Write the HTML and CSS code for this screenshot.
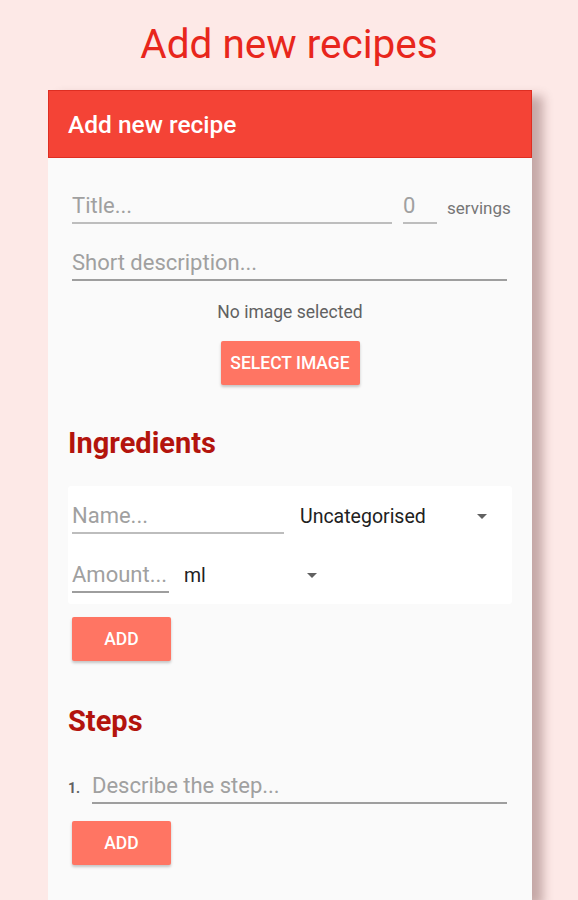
FILE: index.html
```html
<!DOCTYPE html>
<html>
<head>
<meta charset="utf-8">
<link rel="stylesheet" href="styles.css">
</head>
<body>
<h1 class="page-title">Add new recipes</h1>
<div class="card">
  <div class="card-header">Add new recipe</div>
  <div class="card-body">
    <div class="row-title">
      <div class="field field-title placeholder">Title...</div>
      <div class="field field-servings placeholder">0</div>
      <div class="servings-label">servings</div>
    </div>
    <div class="field field-desc placeholder">Short description...</div>
    <div class="no-image">No image selected</div>
    <div class="center"><button class="btn btn-select">SELECT IMAGE</button></div>

    <h2 class="section-title">Ingredients</h2>
    <div class="ingredient-box">
      <div class="ing-row">
        <div class="field field-name placeholder">Name...</div>
        <div class="select select-cat"><span>Uncategorised</span><span class="arrow"></span></div>
      </div>
      <div class="ing-row ing-row2">
        <div class="field field-amount placeholder">Amount...</div>
        <div class="select select-unit"><span>ml</span><span class="arrow"></span></div>
      </div>
    </div>
    <button class="btn btn-add">ADD</button>

    <h2 class="section-title steps-title">Steps</h2>
    <div class="step-row">
      <span class="step-num">1.</span>
      <div class="field field-step placeholder">Describe the step...</div>
    </div>
    <button class="btn btn-add btn-add-step">ADD</button>
  </div>
</div>
</body>
</html>
```
FILE: styles.css
```css
html, body {
  margin: 0;
  padding: 0;
  background: #fde9e7;
  font-family: Roboto, "Noto Sans", sans-serif;
  overflow: hidden;
  height: 900px;
}
.page-title {
  margin: 0;
  padding-top: 20px;
  height: 90px;
  box-sizing: border-box;
  text-align: center;
  font-weight: 400;
  font-size: 40.5px;
  line-height: 48px;
  color: #e8261c;
}
.card {
  margin-left: 48px;
  width: 484px;
  height: 810px;
  background: #fafafa;
  box-shadow: 11px 6px 10px rgba(70, 20, 20, 0.3);
}
.card-header {
  height: 68px;
  box-sizing: border-box;
  background: #f44336;
  border: 1px solid #de2e22;
  color: #fff;
  font-size: 24.5px;
  font-weight: 500;
  line-height: 68px;
  padding-left: 19px;
}
.card-body {
  padding: 0 20px;
}
.field {
  height: 32px;
  border-bottom: 2px solid #bdbdbd;
  font-size: 22px;
  line-height: 32px;
  white-space: nowrap;
  overflow: hidden;
}
.placeholder { color: #a0a0a0; }
.row-title {
  display: flex;
  align-items: flex-start;
  margin-top: 32px;
  margin-left: 4px;
}
.field-title { width: 320px; }
.field-servings { width: 34px; margin-left: 11px; }
.servings-label {
  margin-left: 10px;
  font-size: 17px;
  line-height: 36px;
  color: #757575;
  white-space: nowrap;
}
.field-desc {
  margin: 21px 5px 0 4px;
  border-bottom-color: #9e9e9e;
}
.no-image {
  text-align: center;
  margin-top: 20px;
  font-size: 17.5px;
  line-height: 22px;
  color: #616161;
}
.center { text-align: center; margin-top: 18px; }
.btn {
  display: block;
  border: none;
  background: #ff7563;
  color: #fff;
  font-family: Roboto, sans-serif;
  font-weight: 500;
  font-size: 17.5px;
  height: 44px;
  border-radius: 2px;
  padding: 0;
  box-shadow: 0 2px 3px rgba(0,0,0,0.22);
}
.btn-select { width: 139px; margin: 0 auto; }
.section-title {
  margin: 0;
  font-size: 29px;
  font-weight: 700;
  color: #b3140d;
  line-height: 32px;
  margin-top: 42px;
}
.ingredient-box {
  margin-top: 27px;
  background: #fff;
  height: 118px;
  box-sizing: border-box;
  padding: 14px 4px 0;
  border-radius: 3px;
}
.ing-row {
  display: flex;
  align-items: flex-start;
}
.ing-row2 { margin-top: 25px; }
.field-name { width: 212px; }
.field-amount { width: 97px; border-bottom-color: #9e9e9e; }
.select {
  display: flex;
  align-items: center;
  justify-content: space-between;
  height: 32px;
  font-size: 19.5px;
  color: #212121;
}
.select-cat { margin-left: 16px; width: 187px; }
.select-unit { margin-left: 15px; width: 133px; }
.arrow {
  width: 0;
  height: 0;
  border-left: 5px solid transparent;
  border-right: 5px solid transparent;
  border-top: 5px solid #616161;
}
.btn-add {
  width: 99px;
  margin-top: 13px;
  margin-left: 4px;
}
.steps-title { margin-top: 44px; }
.step-row {
  display: flex;
  align-items: flex-start;
  margin-top: 33px;
}
.step-num {
  width: 24px;
  font-size: 14px;
  font-weight: 700;
  color: #616161;
  line-height: 36px;
}
.field-step {
  flex: 1;
  margin-right: 5px;
  border-bottom-color: #9e9e9e;
}
.btn-add-step { margin-top: 15px; }
```
